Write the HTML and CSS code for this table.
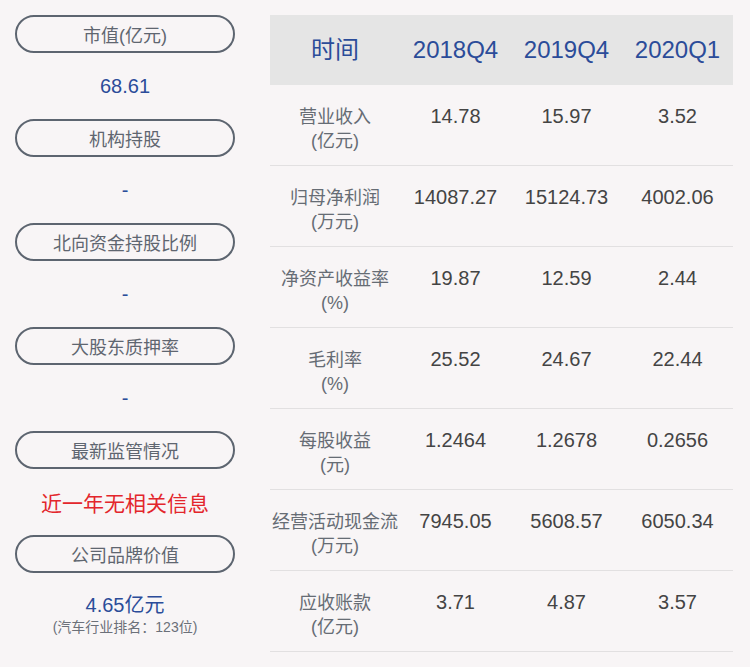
FILE: index.html
```html
<!DOCTYPE html>
<html lang="zh">
<head>
<meta charset="utf-8">
<link rel="stylesheet" href="styles.css">
</head>
<body>
<div class="page">
  <div class="side">
    <div class="block"><div class="pill">市值(亿元)</div><div class="val">68.61</div></div>
    <div class="block"><div class="pill">机构持股</div><div class="val">-</div></div>
    <div class="block"><div class="pill">北向资金持股比例</div><div class="val">-</div></div>
    <div class="block"><div class="pill">大股东质押率</div><div class="val">-</div></div>
    <div class="block"><div class="pill">最新监管情况</div><div class="val red">近一年无相关信息</div></div>
    <div class="block"><div class="pill">公司品牌价值</div><div class="val brand"><span>4.65亿元</span><span class="sub">(汽车行业排名：123位)</span></div></div>
  </div>
  <div class="table">
    <div class="row head"><div>时间</div><div>2018Q4</div><div>2019Q4</div><div>2020Q1</div></div>
    <div class="row"><div class="lab">营业收入<br>(亿元)</div><div>14.78</div><div>15.97</div><div>3.52</div></div>
    <div class="row"><div class="lab">归母净利润<br>(万元)</div><div>14087.27</div><div>15124.73</div><div>4002.06</div></div>
    <div class="row"><div class="lab">净资产收益率<br>(%)</div><div>19.87</div><div>12.59</div><div>2.44</div></div>
    <div class="row"><div class="lab">毛利率<br>(%)</div><div>25.52</div><div>24.67</div><div>22.44</div></div>
    <div class="row"><div class="lab">每股收益<br>(元)</div><div>1.2464</div><div>1.2678</div><div>0.2656</div></div>
    <div class="row"><div class="lab">经营活动现金流<br>(万元)</div><div>7945.05</div><div>5608.57</div><div>6050.34</div></div>
    <div class="row"><div class="lab">应收账款<br>(亿元)</div><div>3.71</div><div>4.87</div><div>3.57</div></div>
  </div>
</div>
</body>
</html>
```
FILE: styles.css
```css
html, body {
  margin: 0;
  padding: 0;
  background: #f8f5f6;
}
body {
  font-family: "Liberation Sans", "Noto Sans CJK SC", sans-serif;
  width: 750px;
  height: 667px;
  overflow: hidden;
}
.page {
  display: flex;
  gap: 35px;
  padding: 15px 17px 0 15px;
}
.side {
  width: 220px;
  display: flex;
  flex-direction: column;
}
.block {
  display: flex;
  flex-direction: column;
}
.pill {
  height: 38px;
  box-sizing: border-box;
  border: 2px solid #5d6570;
  border-radius: 19px;
  display: flex;
  align-items: center;
  justify-content: center;
  font-size: 18px;
  color: #5f6670;
}
.val {
  height: 66px;
  display: flex;
  align-items: center;
  justify-content: center;
  font-size: 20px;
  color: #2b4c99;
}
.val.red {
  color: #e3262c;
  font-size: 21px;
}
.val.brand {
  flex-direction: column;
  justify-content: flex-start;
  padding-top: 20px;
  box-sizing: border-box;
  line-height: 24px;
}
.val .sub {
  font-size: 14px;
  line-height: 20px;
  color: #6b7079;
}
.table {
  width: 463px;
  display: flex;
  flex-direction: column;
}
.row {
  display: grid;
  grid-template-columns: 130px 111px 111px 111px;
  height: 81px;
  box-sizing: border-box;
  border-bottom: 1px solid #e2e0e1;
  padding-top: 19px;
  text-align: center;
  font-size: 20px;
  line-height: 24px;
  color: #444444;
}
.row .lab {
  font-size: 18px;
  color: #666c74;
  line-height: 24px;
  padding-top: 1px;
}
.row.head {
  height: 70px;
  background: #e5e5e5;
  border-bottom: none;
  padding-top: 0;
  align-items: center;
  font-size: 24px;
  color: #2b4c99;
}
```
